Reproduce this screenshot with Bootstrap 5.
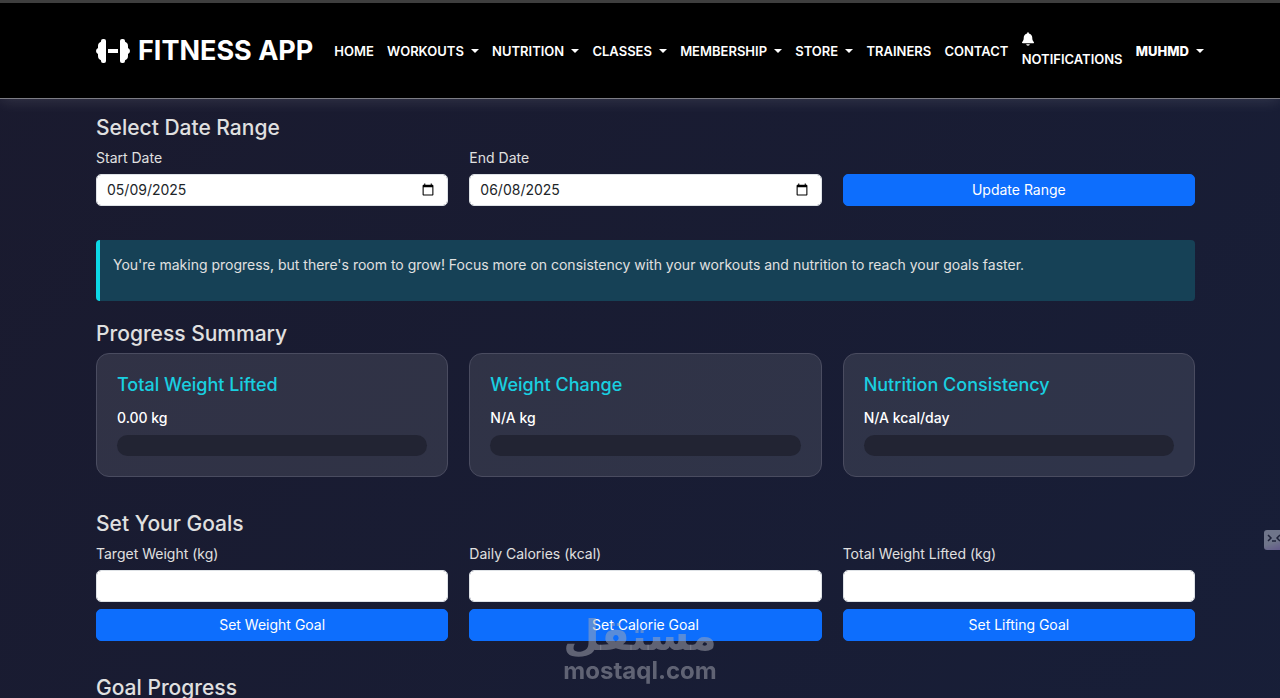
<!DOCTYPE html>
<html lang="en" data-bs-theme="light">
<head>
<meta charset="utf-8">
<meta name="viewport" content="width=device-width, initial-scale=1">
<title>Fitness App</title>
<link href="https://cdn.jsdelivr.net/npm/bootstrap@5.3.0/dist/css/bootstrap.min.css" rel="stylesheet">
<style>
  body {
    font-family: Inter, "Liberation Sans", sans-serif;
    font-size: 14px;
    line-height: 21px;
    color: #e0e0e0;
    background: linear-gradient(135deg, #1a1a2e, #16213e 165%) #1a1a2e;
    min-height: 100vh;
  }
  .page-gutter { padding-left: 96px; padding-right: 85px; }

  .site-nav {
    background: #000;
    border-top: 3px solid #3e3e3e;
    border-bottom: 1px solid #7c7c84;
    box-shadow: 0 2px 14px rgba(255, 255, 255, .12);
    padding-top: 24px;
    padding-bottom: 23px;
    padding-right: 76px;
    min-height: 99px;
  }
  .site-nav .navbar-brand { color: #fff; font-size: 27px; line-height: 40px; font-weight: 700; }
  .site-nav .navbar-brand svg { width: 34px; height: 26px; }
  .site-nav .nav { padding-left: 21px; }
  .site-nav .nav-link {
    color: #fff;
    font-size: 13px;
    line-height: 21px;
    font-weight: 600;
    padding: 0;
    white-space: nowrap;
    text-transform: uppercase;
  }
  .site-nav .dropdown-toggle::after { margin-left: 7px; border-width: 4px 4px 0; vertical-align: 3px; }
  .site-nav .user-link { font-weight: 800; }
  .bell { display: block; width: 12px; height: 14px; margin-bottom: 3px; }

  h2 { font-size: 21px; line-height: 25px; font-weight: 500; margin-bottom: 7px; }
  .tri { --bs-gutter-x: 21px; }
  .form-label { margin-bottom: 6px; }
  .form-control, .btn {
    height: 32px;
    font-size: 14px;
    line-height: 20px;
    padding: 5px 10px;
    border-radius: 5px;
  }
  .form-control { border-color: #dee2e6; color: #212529; }
  .goal-input { margin-bottom: 7px; }
  .btn-primary { --bs-btn-bg: #0d6efd; --bs-btn-border-color: #0d6efd; }
  .section { margin-top: 34px; }

  .notice {
    background: #164156;
    border-left: 4px solid #0dd8e6;
    border-radius: 4px;
    padding: 14px 14px 26px 13px;
    margin-bottom: 20px;
  }
  .stat-card {
    --bs-card-border-color: #4a4c60;
    --bs-card-bg: rgba(255, 255, 255, .1);
    --bs-card-border-radius: 13px;
    --bs-card-spacer-x: 20px;
    --bs-card-spacer-y: 20px;
    color: #fff;
  }
  .stat-card .card-title { color: #19cfe0; font-size: 18px; line-height: 21px; font-weight: 500; margin-bottom: 12px; }
  .stat-card .card-text { font-weight: 500; margin-bottom: 7px; }
  .stat-card .progress { height: 21px; border-radius: 11px; background: #222433; }

  .watermark {
    bottom: 14px;
    left: 50%;
    transform: translateX(-50%);
    color: rgba(168, 170, 180, .5);
    font-weight: 700;
    text-align: center;
    white-space: nowrap;
    pointer-events: none;
  }
  .watermark-ar { font-family: "DejaVu Sans", sans-serif; font-size: 42px; line-height: 44px; }
  .watermark-en { font-size: 24px; line-height: 26px; }
  .edge-tab {
    top: 530px;
    right: 0;
    width: 16px;
    height: 20px;
    padding: 0;
    border: 0;
    border-radius: 3px 0 0 3px;
    background: linear-gradient(160deg, #6f758a 60%, #62598a);
  }
</style>
</head>
<body>
<nav class="site-nav page-gutter navbar-dark d-flex align-items-center">
  <a class="navbar-brand d-flex align-items-center gap-2 m-0 p-0" href="#">
    <svg viewBox="0 0 34 26" fill="#fff" aria-hidden="true">
      <rect x="5" y="1" width="5" height="24" rx="2"/><path d="M6 3L3 5Q2 6 2 8V10Q0 11 0 13T2 16V18Q2 20 3 21L6 23Z"/>
      <rect x="12" y="11" width="10" height="4"/>
      <rect x="24" y="1" width="5" height="24" rx="2"/><path d="M28 3L31 5Q32 6 32 8V10Q34 11 34 13T32 16V18Q32 20 31 21L28 23Z"/>
    </svg>
    FITNESS APP
  </a>
  <ul class="nav flex-nowrap flex-grow-1 align-items-center justify-content-between">
    <li><a class="nav-link" href="#">Home</a></li>
    <li class="dropdown"><a class="nav-link dropdown-toggle" href="#" data-bs-toggle="dropdown">Workouts</a></li>
    <li class="dropdown"><a class="nav-link dropdown-toggle" href="#" data-bs-toggle="dropdown">Nutrition</a></li>
    <li class="dropdown"><a class="nav-link dropdown-toggle" href="#" data-bs-toggle="dropdown">Classes</a></li>
    <li class="dropdown"><a class="nav-link dropdown-toggle" href="#" data-bs-toggle="dropdown">Membership</a></li>
    <li class="dropdown"><a class="nav-link dropdown-toggle" href="#" data-bs-toggle="dropdown">Store</a></li>
    <li><a class="nav-link" href="#">Trainers</a></li>
    <li><a class="nav-link" href="#">Contact</a></li>
    <li><a class="nav-link" href="#">
      <svg class="bell" viewBox="0 0 448 512" fill="#fff" aria-hidden="true"><path d="M224 0c-18 0-32 14-32 32v19C119 66 64 131 64 208v19c0 47-17 92-48 127l-8 9c-8 9-10 23-5 34S19 416 32 416h384c13 0 24-7 29-19s3-25-5-34l-8-9C401 319 384 274 384 227v-19c0-77-55-142-128-157V32c0-18-14-32-32-32zm45 493c12-12 19-28 19-45H160c0 17 7 33 19 45s28 19 45 19 33-7 45-19z"/></svg>
      Notifications</a></li>
    <li class="dropdown"><a class="nav-link dropdown-toggle user-link" href="#" data-bs-toggle="dropdown">Muhmd</a></li>
  </ul>
</nav>

<main class="page-gutter pt-3">
  <section>
    <h2>Select Date Range</h2>
    <form class="row tri align-items-end">
      <div class="col-4">
        <label class="form-label d-block" for="start">Start Date</label>
        <input class="form-control" type="date" id="start" value="2025-05-09">
      </div>
      <div class="col-4">
        <label class="form-label d-block" for="end">End Date</label>
        <input class="form-control" type="date" id="end" value="2025-06-08">
      </div>
      <div class="col-4">
        <button class="btn btn-primary w-100" type="submit">Update Range</button>
      </div>
    </form>
  </section>

  <div class="notice section" role="status">You're making progress, but there's room to grow! Focus more on consistency with your workouts and nutrition to reach your goals faster.</div>

  <section>
    <h2>Progress Summary</h2>
    <div class="row tri">
      <div class="col-4">
        <div class="card stat-card"><div class="card-body">
          <h3 class="card-title">Total Weight Lifted</h3>
          <p class="card-text">0.00 kg</p>
          <div class="progress" role="progressbar" aria-label="Total weight lifted" aria-valuenow="0" aria-valuemin="0" aria-valuemax="100"></div>
        </div></div>
      </div>
      <div class="col-4">
        <div class="card stat-card"><div class="card-body">
          <h3 class="card-title">Weight Change</h3>
          <p class="card-text">N/A kg</p>
          <div class="progress" role="progressbar" aria-label="Weight change" aria-valuenow="0" aria-valuemin="0" aria-valuemax="100"></div>
        </div></div>
      </div>
      <div class="col-4">
        <div class="card stat-card"><div class="card-body">
          <h3 class="card-title">Nutrition Consistency</h3>
          <p class="card-text">N/A kcal/day</p>
          <div class="progress" role="progressbar" aria-label="Nutrition consistency" aria-valuenow="0" aria-valuemin="0" aria-valuemax="100"></div>
        </div></div>
      </div>
    </div>
  </section>

  <section class="section">
    <h2>Set Your Goals</h2>
    <div class="row tri">
      <form class="col-4">
        <label class="form-label d-block" for="weight">Target Weight (kg)</label>
        <input class="form-control goal-input" type="number" id="weight">
        <button class="btn btn-primary d-block w-100" type="submit">Set Weight Goal</button>
      </form>
      <form class="col-4">
        <label class="form-label d-block" for="calories">Daily Calories (kcal)</label>
        <input class="form-control goal-input" type="number" id="calories">
        <button class="btn btn-primary d-block w-100" type="submit">Set Calorie Goal</button>
      </form>
      <form class="col-4">
        <label class="form-label d-block" for="lifted">Total Weight Lifted (kg)</label>
        <input class="form-control goal-input" type="number" id="lifted">
        <button class="btn btn-primary d-block w-100" type="submit">Set Lifting Goal</button>
      </form>
    </div>
  </section>

  <section class="section">
    <h2 class="mb-0">Goal Progress</h2>
  </section>
</main>

<div class="watermark position-fixed">
  <div class="watermark-ar" lang="ar" dir="rtl">مستقل</div>
  <div class="watermark-en">mostaql.com</div>
</div>
<button class="edge-tab position-fixed" type="button" aria-label="Open side panel">
  <svg class="d-block" width="16" height="20" viewBox="0 0 16 20" fill="none" stroke="#1d2138" stroke-width="1.500" aria-hidden="true"><path d="M4 5l3 3-3 3M8 11h4M16 5l-3 3 3 3"/></svg>
</button>
<script src="https://cdn.jsdelivr.net/npm/bootstrap@5.3.0/dist/js/bootstrap.bundle.min.js"></script>
</body>
</html>
